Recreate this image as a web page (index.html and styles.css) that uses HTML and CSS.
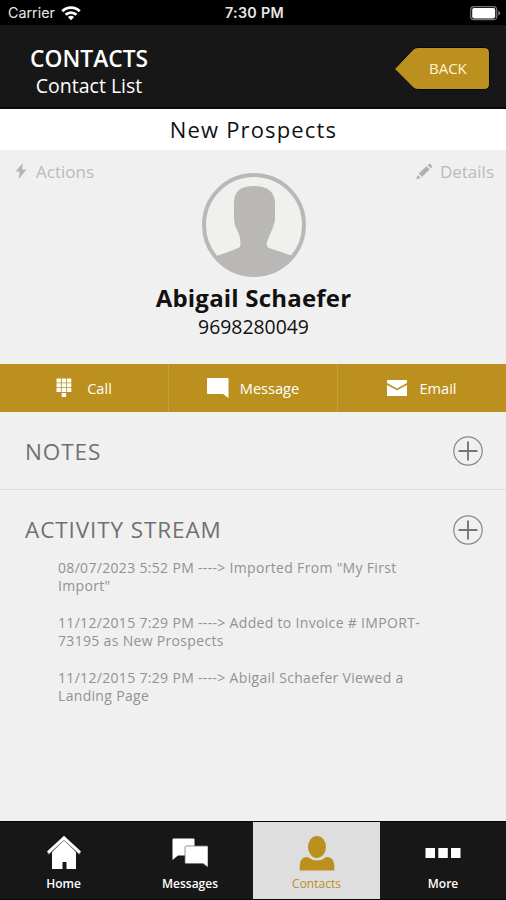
FILE: index.html
```html
<!DOCTYPE html>
<html lang="en">
<head>
    <meta charset="UTF-8">
    <meta name="viewport" content="width=device-width, initial-scale=1.0">
    <title>Contacts</title>
    <link rel="stylesheet" href="styles.css">
</head>
<body>
    <div class="status-bar">
        <div class="carrier">
            <span>Carrier</span>
            <svg width="20" height="15" viewBox="0 0 20 15" fill="none" stroke="#fff" stroke-width="2.8">
                <path d="M1.3 5.2a12.2 12.2 0 0 1 17.4 0"/>
                <path d="M4.6 8.8a7.6 7.6 0 0 1 10.8 0"/>
                <path d="M10 14.2L6.9 11.1a4.5 4.5 0 0 1 6.2 0z" fill="#fff" stroke="none"/>
            </svg>
        </div>
        <div class="time">7:30 PM</div>
        <div class="battery">
            <svg width="31" height="15" viewBox="0 0 31 15">
                <rect x=".7" y=".7" width="26" height="13" rx="3.2" fill="none" stroke="#777" stroke-width="1.2"/>
                <rect x="2.2" y="2" width="23" height="10.4" rx="1.8" fill="#fff"/>
                <path d="M28.2 4.8q2 .8 2 2.4t-2 2.4z" fill="#777"/>
            </svg>
        </div>
    </div>

    <div class="header">
        <div class="heading">
            <h1>CONTACTS</h1>
            <p>Contact List</p>
        </div>
        <div class="back">
            <svg width="96" height="44" viewBox="0 0 96 44">
                <path d="M.5 22L19.500 2Q21.500 .5 24 .5H90Q95.500 .5 95.500 6V37Q95.500 42.500 90 42.500H24Q21.500 42.500 19.500 41Z" fill="#bc901f" stroke="#080808"/>
            </svg>
            <span>BACK</span>
        </div>
    </div>

    <div class="group-title">New Prospects</div>

    <div class="profile">
        <div class="profile-links">
            <div class="link">
                <svg width="12" height="16" viewBox="0 0 12 16"><path d="M7.800 0L.5 8.600H4.600L3.800 16 11.500 6.600H7.200Z" fill="#b5b5b5"/></svg>
                <span>Actions</span>
            </div>
            <div class="link">
                <svg width="17" height="17" viewBox="0 0 17 17" fill="#b0b0b0"><path d="M.3 16.300L1.600 11.900 4.800 15.100ZM2.700 10.600L10.500 3.200 13.700 6.400 6 14ZM11.700 2.200L13.500.6 16.600 3.600 14.900 5.300Z"/></svg>
                <span>Details</span>
            </div>
        </div>
        <svg class="avatar" width="104" height="104" viewBox="0 0 104 104">
            <defs><clipPath id="face"><circle cx="52" cy="52" r="51"/></clipPath></defs>
            <circle cx="52" cy="52" r="50" fill="#f0f0ef" stroke="#b9b8b7" stroke-width="4"/>
            <path clip-path="url(#face)" d="M8 85Q27 79 36 75Q39 74 38.500 70Q38 62 35 57Q32 52 32 46V29Q32 13 52 13Q73 13 73 31V47Q71 56 68 61L65 69Q64 74 67 75Q80 79 96 85V104H8Z" fill="#b9b8b7"/>
        </svg>
        <h2>Abigail Schaefer</h2>
        <p class="phone">9698280049</p>
    </div>

    <div class="actions">
        <div class="action call">
            <svg width="16" height="20" viewBox="0 0 16 20" fill="#fff">
                <path d="M.5.500h4.400v4H.5zM5.700.500h4.400v4H5.700zM10.900.500h4.400v4h-4.400zM.5 5.300h4.400v4H.5zM5.700 5.300h4.400v4H5.700zM10.900 5.300h4.400v4h-4.400zM.5 10.100h4.400v4H.5zM5.700 10.100h4.400v4H5.700zM10.900 10.100h4.400v4h-4.400zM5.700 15h4.400v4H5.700z"/>
            </svg>
            <span>Call</span>
        </div>
        <div class="action message">
            <svg width="22" height="20" viewBox="0 0 22 20"><path d="M1 0h19.500Q21.500 0 21.500 1V20L16 16H1Q0 16 0 15V1Q0 0 1 0z" fill="#fff"/></svg>
            <span>Message</span>
        </div>
        <div class="action email">
            <svg width="20" height="16" viewBox="0 0 20 16" fill="#fff"><path d="M0 0H20V3L10 8.500 0 3ZM0 5L10 10.300 20 5V16H0Z"/></svg>
            <span>Email</span>
        </div>
    </div>

    <div class="section notes">
        <h3>NOTES</h3>
        <svg class="plus" width="30" height="30" viewBox="0 0 30 30" fill="none"><circle cx="15" cy="15" r="14.200" stroke="#85898b" stroke-width="1.200"/><path d="M15 5.500V24.500M5.500 15H24.500" stroke="#71777b" stroke-width="1.900"/></svg>
    </div>

    <div class="stream">
        <div class="section">
            <h3>ACTIVITY STREAM</h3>
            <svg class="plus" width="30" height="30" viewBox="0 0 30 30" fill="none"><circle cx="15" cy="15" r="14.200" stroke="#85898b" stroke-width="1.200"/><path d="M15 5.500V24.500M5.500 15H24.500" stroke="#71777b" stroke-width="1.900"/></svg>
        </div>
        <p>08/07/2023 5:52 PM ----&gt; Imported From "My First<br>Import"</p>
        <p>11/12/2015 7:29 PM ----&gt; Added to Invoice # IMPORT-<br>73195 as New Prospects</p>
        <p>11/12/2015 7:29 PM ----&gt; Abigail Schaefer Viewed a<br>Landing Page</p>
    </div>

    <div class="tabs">
        <div class="tab">
            <svg width="36" height="36" viewBox="0 0 36 36"><path d="M18 5L30 17V34H20.500V27H16.500V34H6V17Z" fill="#fff"/><path d="M2 18.800L18 4 34 18.800" fill="none" stroke="#777" stroke-width="2.500"/><path d="M2 17.500L18 2.800 34 17.500" fill="none" stroke="#fff" stroke-width="3"/></svg>
            <span>Home</span>
        </div>
        <div class="tab">
            <svg width="36" height="36" viewBox="0 0 36 36"><path d="M1.500 3.500H21.500Q22.500 3.500 22.500 4.500V20.500H6L.5 25V4.500Q.5 3.500 1.500 3.500Z" fill="#fff"/><path d="M14 11H35Q36 11 36 12V32L31 28.500H14Q13 28.500 13 27.500V12Q13 11 14 11Z" fill="#fff" stroke="#777" stroke-width=".8"/></svg>
            <span>Messages</span>
        </div>
        <div class="tab active">
            <svg width="36" height="36" viewBox="0 0 36 36" fill="#bc901f"><ellipse cx="18" cy="12" rx="9" ry="11"/><path d="M.7 35.500V31Q.7 22 8.500 22Q18 29 27.500 22Q35.300 22 35.300 31V35.500Z"/></svg>
            <span>Contacts</span>
        </div>
        <div class="tab">
            <svg width="36" height="36" viewBox="0 0 36 36" fill="#fff"><path d="M.5 13h9.500v10H.5zM13.300 13h9.500v10h-9.500zM26 13h9.500v10H26z"/></svg>
            <span>More</span>
        </div>
    </div>
</body>
</html>
```

FILE: styles.css
```css
* { box-sizing: border-box; }
body { margin: 0; height: 900px; display: flex; flex-direction: column; background: #f0f0f0; font-family: "Open Sans", sans-serif; color: #111; overflow: hidden; }
h1, h2, h3, p { margin: 0; }
svg { display: block; flex-shrink: 0; }

.status-bar { height: 25px; flex-shrink: 0; display: grid; grid-template-columns: 1fr 1fr 1fr; align-items: center; padding: 1px 5px 0 8px; background: #000; color: #e8e8e8; font-family: Inter, sans-serif; font-size: 14.3px; line-height: 24px; }
.carrier { display: flex; align-items: center; gap: 6px; }
.time { text-align: center; font-weight: 600; letter-spacing: .3px; }
.battery { display: flex; justify-content: flex-end; }

.header { height: 84px; flex-shrink: 0; display: flex; justify-content: space-between; padding: 22px 16px 0 30px; background: #171717; border-bottom: 2px solid #080808; color: #fff; }
.heading { text-align: center; margin-top: -2px; }
.heading h1 { font-size: 22.8px; line-height: 27px; font-weight: 600; }
.heading p { font-size: 19.5px; line-height: 28px; }
.back { display: grid; width: 96px; height: 44px; }
.back svg, .back span { grid-area: 1 / 1; }
.back span { padding-left: 35px; line-height: 43px; font-size: 15px; font-weight: 500; color: #fff3d9; }

.group-title { height: 41px; flex-shrink: 0; padding-left: 1px; background: #fff; text-align: center; font-size: 22px; line-height: 41px; letter-spacing: 1.15px; }

.profile { height: 214px; flex-shrink: 0; display: flex; flex-direction: column; align-items: center; }
.profile-links { width: 100%; height: 23px; display: flex; justify-content: space-between; padding: 8px 12px 0 15px; }
.link { display: flex; align-items: center; gap: 9px; height: 26px; color: #bababa; font-size: 17px; }
.link:last-child { gap: 7px; }
.avatar { margin-left: 2px; }
.profile h2 { margin-top: 5px; padding-left: 1px; font-size: 24px; line-height: 32px; font-weight: 700; letter-spacing: .2px; }
.phone { padding-left: 1px; font-size: 19.4px; line-height: 26px; }

.actions { height: 48px; flex-shrink: 0; display: grid; grid-template-columns: 169px 169px 168px; background: #bc901f; color: #fff; font-size: 14.6px; font-weight: 500; }
.action { display: flex; align-items: center; justify-content: center; padding-bottom: 1px; border-right: 1px solid #c9a041; }
.action:last-child { border-right: 0; }
.call { gap: 15px; }
.message { gap: 11px; }
.email { gap: 12px; }

.section { display: flex; align-items: center; justify-content: space-between; height: 78px; padding: 1px 23px 0 25px; }
.notes { flex-shrink: 0; border-bottom: 1px solid #dedede; }
.section h3 { font-size: 22.5px; font-weight: 500; letter-spacing: .9px; color: #707070; }
.stream { flex: 1; }
.stream .section h3 { margin-top: -1px; }
.stream p { padding-left: 58px; margin-bottom: 18px; font-size: 14px; line-height: 18.5px; letter-spacing: .32px; color: #929292; }
.stream .section + p { margin-top: -9.5px; }

.tabs { height: 79px; flex-shrink: 0; display: grid; grid-template-columns: 127px 126px 127px 126px; background: #171717; color: #fff; border-top: 1px solid #080808; border-bottom: 1px solid #080808; }
.tab { display: flex; flex-direction: column; align-items: center; padding-top: 13px; font-size: 12px; font-weight: 600; }
.tab span { margin-top: 4px; line-height: 17px; }
.tab.active { background: #dedede; color: #bc901f; font-weight: 400; }
```
